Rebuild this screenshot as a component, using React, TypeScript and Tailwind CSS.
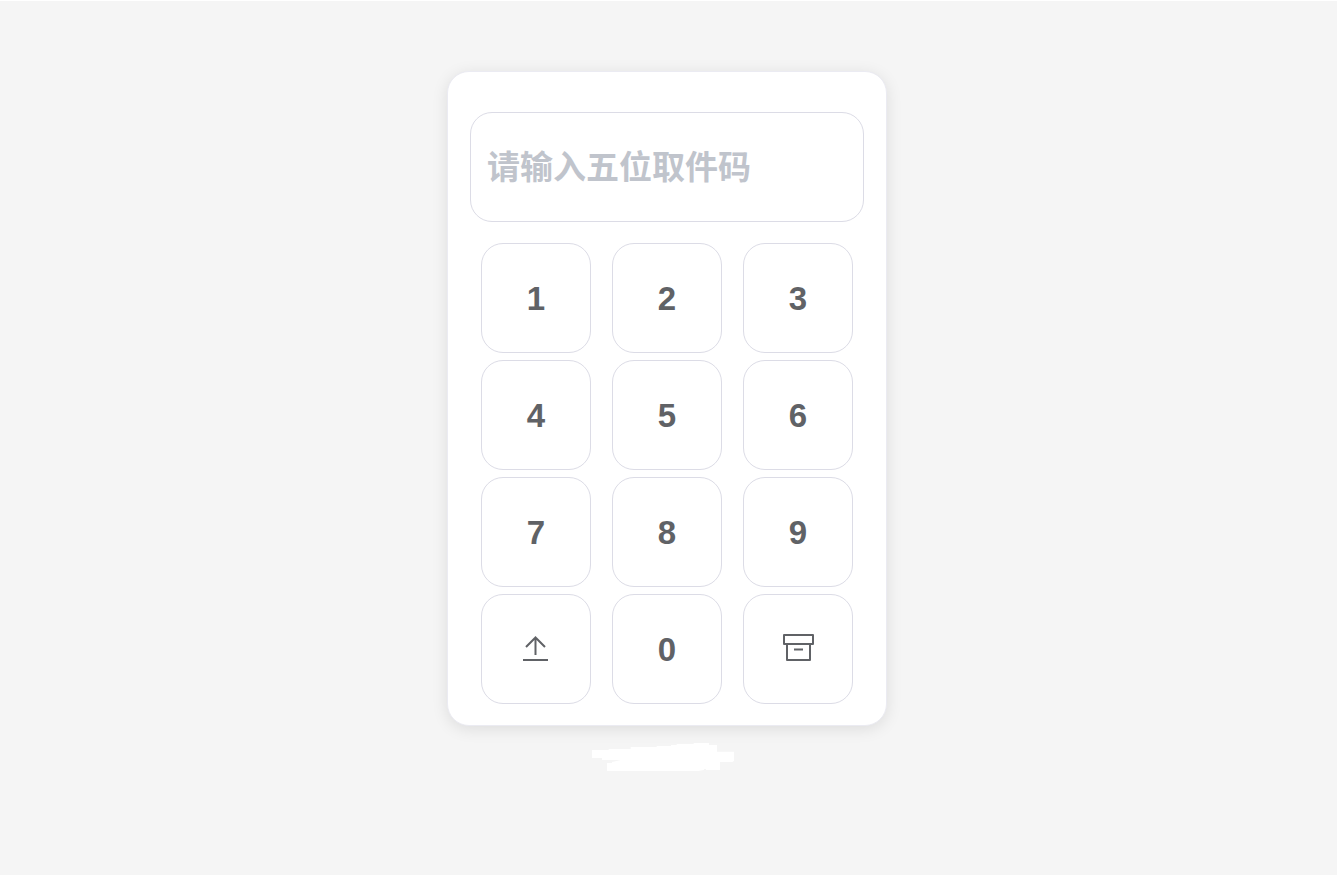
import { useState } from "react";
import type { ReactNode } from "react";

const CODE_LENGTH = 5;

function UploadIcon() {
  return (
    <svg viewBox="0 1 34 34" className="size-[34px]" fill="none" stroke="currentColor" strokeWidth="2" aria-hidden="true">
      <path d="M4 28h25M16.5 5v18M7 15l9.5-9.5L26 15" />
    </svg>
  );
}

function BoxIcon() {
  return (
    <svg viewBox="0 1 34 34" className="size-[34px]" fill="none" stroke="currentColor" strokeWidth="2" strokeLinejoin="round" aria-hidden="true">
      <path d="M3 3h29v9H3zM6 12v16h23V12M13 17.5h9" />
    </svg>
  );
}

function Scribble() {
  return (
    <svg viewBox="0 0 426 84" className="mr-2 h-7 w-[142px]" fill="#ffffff" aria-hidden="true">
      <path d="M0 21H50V18H116V12H194V9H237V6H254V3H305V0H351V6H375V26H426V53L422 57H384V81H342V78H336V81L318 84H45V60H60V57L74 54L86 51H30V45H0Z" />
    </svg>
  );
}

function Key({ label, onClick, children }: { label: string; onClick?: () => void; children: ReactNode }) {
  return (
    <button
      type="button"
      aria-label={label}
      onClick={onClick}
      className="flex size-[110px] cursor-pointer items-center justify-center rounded-[22px] border border-[#dcdce6] bg-white pt-0.5 text-[33px] leading-10 font-bold text-[#606266] hover:bg-[#f5f7fa]"
    >
      {children}
    </button>
  );
}

export default function App() {
  const [code, setCode] = useState("");
  const press = (digit: string) => setCode((c) => (c + digit).slice(0, CODE_LENGTH));

  return (
    <div className="flex min-h-screen flex-col items-center border-t border-white bg-[#f5f5f5] pt-[70px] pr-[3px] font-['Liberation_Sans','Noto_Sans_CJK_SC',sans-serif]">
      <main className="flex w-full max-w-[440px] flex-col items-center rounded-[22px] border border-[#ebebf2] bg-white px-[22px] pt-10 pb-[21px] shadow-[0_3px_16px_rgba(0,0,0,0.1)]">
        <input
          type="text"
          aria-label="取件码"
          placeholder="请输入五位取件码"
          maxLength={CODE_LENGTH}
          value={code}
          onChange={(e) => setCode(e.target.value)}
          className="h-[110px] w-full rounded-[22px] border border-[#dcdce6] bg-white px-4 pt-0.5 text-[33px] font-bold text-[#606266] outline-none placeholder:text-[#c0c4cc]"
        />
        <div className="mt-[21px] grid grid-cols-3 gap-x-[21px] gap-y-[7px]">
          {["1", "2", "3", "4", "5", "6", "7", "8", "9"].map((digit) => (
            <Key key={digit} label={digit} onClick={() => press(digit)}>
              {digit}
            </Key>
          ))}
          <Key label="上传">
            <UploadIcon />
          </Key>
          <Key label="0" onClick={() => press("0")}>
            0
          </Key>
          <Key label="文件箱">
            <BoxIcon />
          </Key>
        </div>
      </main>
      <footer className="pt-[17px]">
        <Scribble />
      </footer>
    </div>
  );
}
